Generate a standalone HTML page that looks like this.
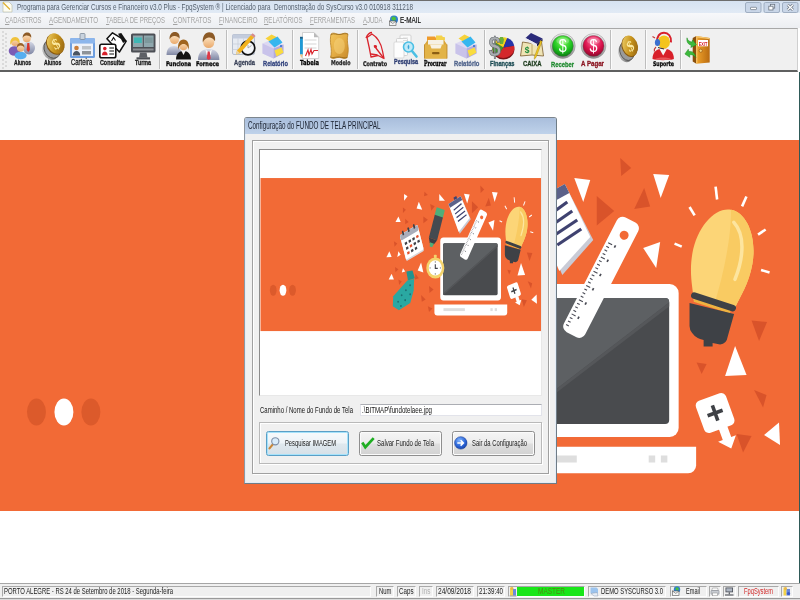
<!DOCTYPE html>
<html lang="pt-BR"><head><meta charset="utf-8"><title>Programa para Gerenciar Cursos e Financeiro</title>
<style>
*{margin:0;padding:0;box-sizing:border-box}
html,body{width:800px;height:600px;overflow:hidden;background:#fff;font-family:"Liberation Sans",sans-serif}
.abs{position:absolute}
#app{will-change:transform;position:relative;width:800px;height:600px;overflow:hidden;background:#fff}
.t{position:absolute;white-space:pre;transform-origin:0 50%}
#titlebar{left:0;top:0;width:800px;height:13px;background:linear-gradient(#d6e2f1,#e1eaf5);border-top:1px solid #6d6d6d}
#menubar{left:0;top:13px;width:800px;height:15px;background:linear-gradient(#f7f8fa,#eceef2)}
#toolbar{left:0;top:28px;width:798px;height:44px;background:#f0f0f0;border-top:1px solid #a8a8a8;border-bottom:2px solid #5f6060;border-right:1px solid #cfcfcf}
#bgimg{left:0;top:72px;width:799px;height:511px;overflow:hidden}
#rightline{left:799px;top:72px;width:1px;height:511px;background:#2f5a58}
#status{left:0;top:583px;width:800px;height:15px;background:#f0f0f0;border-top:1px solid #a6a6a6}
#taskbit{left:0;top:598px;width:800px;height:2px;background:#dadada;border-top:1px solid #9a9a9a}
.sp{position:absolute;top:586px;height:11px;border:1px solid;border-color:#a9a9a9 #fdfdfd #fdfdfd #a9a9a9}
#dlg{left:244px;top:117px;width:313px;height:367px;background:#f0f0f0;border:1px solid #6f7c86;border-left-color:#8f979f;border-top-color:#7d868e;border-radius:3px 3px 0 0;box-shadow:0 0 0 0 #000}
#dlgtitle{left:0;top:0;width:311px;height:16px;background:linear-gradient(#a9bedc,#bfd2ea);border-radius:2px 2px 0 0}
#dlgin{left:0;top:16px;width:311px;height:349px;border:solid #e3ebf5;border-width:0 1px 1px 1px;background:#f0f0f0}
.frame{position:absolute;border:1px solid #a0a0a0;box-shadow:inset 1px 1px 0 #fff, 1px 1px 0 #fff}
.btn{position:absolute;top:431px;height:25px;border:1px solid #8f8f8f;border-radius:2.500px;background:linear-gradient(#f5f5f5 0%,#ececec 48%,#dedede 52%,#d2d2d2 100%);box-shadow:inset 0 0 0 1px #fbfbfb}

</style></head><body><div id="app">
<svg width="0" height="0" style="position:absolute">
<defs>
<symbol id="illus" viewBox="0 0 800 594" preserveAspectRatio="none">
<rect x="0" y="0" width="800" height="594" fill="#fff"/>
<rect x="0" y="68" width="800" height="371" fill="#f26a36"/>
<!-- dots -->
<ellipse cx="36.5" cy="340" rx="9.5" ry="13.6" fill="#dc5a2b"/>
<ellipse cx="64" cy="340" rx="9.5" ry="13.6" fill="#fff"/>
<ellipse cx="91" cy="340" rx="9.5" ry="13.6" fill="#dc5a2b"/>
<!-- dark orange triangles -->
<g fill="#d9532a">
<polygon points="621,86 632,96 622,104"/>
<polygon points="597.5,124 615,139 597.5,153.5"/>
<polygon points="645,116 651,134.5 635,137"/>
<polygon points="752.5,248.5 768,250 760,269"/>
<polygon points="697.5,290.5 707.5,292 702.5,302"/>
<polygon points="755,318 767.5,323 764,335.5"/>
<polygon points="737.5,362 752.5,364 744,380.5"/>
<polygon points="463.5,101.2 473.1,109.4 462.3,112.1"/>
<polygon points="479.5,131.2 492.3,136.6 482.7,147.5"/>
<polygon points="402.7,139.3 411,144.8 402.7,152.9"/>
<polygon points="460.3,161.1 473.1,169.3 460.3,177.5"/>
<polygon points="409.1,166.6 418.7,174.7 409.1,180.2"/>
<polygon points="377.1,221 386.7,226.5 379,234.7"/>
<polygon points="380.3,283.7 389.9,289.1 381.6,296.2"/>
<polygon points="437.9,300 447.5,310.9 436.6,313.7"/>
<polygon points="476.3,330 489.1,338.2 477.6,346.4"/>
<polygon points="453.9,351.8 466.7,362.7 455.9,368.1"/>
<polygon points="473.1,379 485.9,384.5 476.3,392.7"/>
<polygon points="389.9,313.7 399.5,319.1 391.8,327.3"/>
</g>
<!-- white triangles -->
<g fill="#fff">
<polygon points="575,106 591,108 584,130"/>
<polygon points="654,102 670,103 661.5,126"/>
<polygon points="644,176 661,170 657,196"/>
<polygon points="736,274 747.5,303 726,304"/>
<polygon points="780,350.5 781,373 765,363"/>
<polygon points="405.9,106.6 415.5,112.1 405.9,123"/>
<polygon points="505.2,106.6 521.2,123 505.2,123"/>
<polygon points="447.5,125.7 457.1,144.8 441.1,142.1"/>
<polygon points="389.9,161.1 396.3,174.7 381.6,174.7"/>
<polygon points="364.3,245.6 370.7,259.2 356,260.3"/>
<polygon points="389.9,245.6 396.3,253.7 386.7,259.2"/>
<polygon points="453.9,272.8 460.3,297.3 444.3,291.9"/>
<polygon points="370.7,300 377.1,313.7 362.4,313.7"/>
<polygon points="402.7,286.4 409.1,294.6 399.5,297.3"/>
</g>
<!-- calendar -->
<g transform="translate(428 225.4) matrix(.891 -.457 .287 .96 0 0)">
<rect x="-28" y="-33" width="56" height="66" rx="4" fill="#d9d9dd"/>
<rect x="-28" y="-33" width="56" height="62" rx="4" fill="#fff"/>
<rect x="-28" y="-33" width="56" height="14" rx="4" fill="#a9adba"/>
<g fill="#3f4147"><rect x="-20" y="-39" width="5" height="11" rx="2"/><rect x="-2.5" y="-39" width="5" height="11" rx="2"/><rect x="15" y="-39" width="5" height="11" rx="2"/></g>
<g fill="#3f4147">
<rect x="-20" y="-10" width="7" height="6"/><rect x="-8" y="-10" width="7" height="6"/><rect x="4" y="-10" width="7" height="6"/><rect x="16" y="-10" width="7" height="6" fill="#e2502c"/>
<rect x="-20" y="2" width="7" height="6"/><rect x="-8" y="2" width="7" height="6" fill="#e2502c"/><rect x="4" y="2" width="7" height="6"/><rect x="16" y="2" width="7" height="6"/>
<rect x="-20" y="14" width="7" height="6" fill="#e2502c"/><rect x="-8" y="14" width="7" height="6"/><rect x="4" y="14" width="7" height="6"/>
</g>
</g>
<!-- marker -->
<g transform="translate(496 187) rotate(16.6)">
<rect x="-12" y="-47" width="24" height="22" rx="2.500" fill="#4fae79"/>
<rect x="-12" y="-28" width="24" height="58" fill="#454a50"/>
<polygon points="-12,30 12,30 6,42 -6,42" fill="#3a3e44"/>
<polygon points="-6,40 6,40 3.500,50 -3.500,50" fill="#4fae79"/>
</g>
<!-- notepad -->
<g>
<polygon points="533,134 566,113 594,168 563,203" fill="#c9cbd6"/>
<polygon points="531,131 565.5,112 591,165 560,199" fill="#fff"/>
<polygon points="531,131 565.5,112 570,121 535.5,140" fill="#5b6189"/>
<polygon points="545,116 553,111.5 556,117 548,121.5" fill="#3f4270"/>
<g stroke="#3f4270" stroke-width="3.2">
<line x1="546" y1="146" x2="568" y2="130"/>
<line x1="550" y1="155" x2="573" y2="139"/>
<line x1="554" y1="164" x2="578" y2="148"/>
<line x1="558" y1="173" x2="582" y2="157"/>
</g>
</g>
<!-- laptop -->
<rect x="508" y="212" width="171.500" height="153" rx="9" fill="#fff"/>
<rect x="516" y="226" width="154" height="126" rx="4" fill="#494b4e"/>
<path d="M520 226h146a4 4 0 0 1 4 4v.500L516 348.600v-118.600a4 4 0 0 1 4 -4z" fill="#5d6063"/>
<path d="M670 230.500v4L516 352v-3.400z" fill="#55575a"/>
<path d="M491.500 374.700h205.500v18.600a8 8 0 0 1 -8 8h-189.500a8 8 0 0 1 -8 -8z" fill="#fff"/>
<rect x="517" y="383.500" width="60.500" height="7" fill="#dedede"/>
<rect x="649.500" y="383.500" width="6.500" height="7" fill="#dedede"/><rect x="661.700" y="383.500" width="6.500" height="7" fill="#dedede"/>
<!-- clock -->
<rect x="490" y="254" width="8" height="8" rx="2" fill="#f4d36b"/>
<circle cx="494" cy="286" r="25.500" fill="#f4d36b"/>
<circle cx="494" cy="286" r="18.500" fill="#fff"/>
<path d="M494 270v3M494 299v3M478 286h3M507 286h3" stroke="#3f4147" stroke-width="2"/>
<path d="M494 277v10h7" stroke="#3f4147" stroke-width="3" fill="none"/>
<!-- tie -->
<g transform="translate(-5 0)">
<polygon points="417.4,294.6 434.7,291.9 441.1,310.9 421.9,316.4" fill="#23938f"/>
<polygon points="420,316.4 439.2,312.6 437.9,340.9 428.3,370.9 396.3,388.8 379,379 380.3,354.5" fill="#2aa8a2"/>
<g fill="#1d6f73"><circle cx="428" cy="328" r="2.5"/><circle cx="416" cy="340" r="2.5"/><circle cx="428" cy="350" r="2.5"/><circle cx="404" cy="352" r="2.5"/><circle cx="414" cy="364" r="2.5"/><circle cx="394" cy="368" r="2.5"/><circle cx="402" cy="378" r="2.5"/></g>
</g>
<!-- ruler -->
<g transform="translate(601.8 205.3) rotate(27.2)">
<rect x="-12" y="-64.500" width="24" height="129" rx="6.500" fill="#fff"/>
<circle cx="1.3" cy="-48" r="4.5" fill="#f26a36"/>
<g stroke="#4a4b55" stroke-width="1.100">
<path d="M-9.500 -34h4.500M-9.500 -30h3M-9.500 -26h3M-9.500 -22h3M-9.500 -18h4.500M-9.500 -14h3M-9.500 -10h3M-9.500 -6h3M-9.500 -2h4.500M-9.500 2h3M-9.500 6h3M-9.500 10h3M-9.500 14h4.500M-9.500 18h3M-9.500 22h3M-9.500 26h3M-9.500 30h4.500M-9.500 34h3M-9.500 38h3M-9.500 42h3M-9.500 46h4.500M-9.500 50h3M-9.500 54h3M-9.500 58h3"/>
</g>
<g fill="#4a4b55"><rect x="-2.500" y="-35" width="1.700" height="2.600"/><rect x="-2.500" y="-19" width="1.700" height="2.600"/><rect x="-2.500" y="-3" width="1.700" height="2.600"/><rect x="-2.500" y="13" width="1.700" height="2.600"/><rect x="-2.500" y="29" width="1.700" height="2.600"/><rect x="-2.500" y="45" width="1.700" height="2.600"/></g>
</g>
<!-- bulb -->
<g stroke="#fff" stroke-width="2.6" stroke-linecap="butt">
<line x1="716.5" y1="114.6" x2="718" y2="127.5"/>
<line x1="747.4" y1="124.5" x2="743" y2="134.4"/>
<line x1="690.4" y1="135" x2="695.5" y2="143.4"/>
<line x1="766.6" y1="157.5" x2="759" y2="162.6"/>
<line x1="675.4" y1="171.6" x2="682.6" y2="174.6"/>
<line x1="762" y1="198" x2="770.5" y2="200.4"/>
</g>
<g transform="translate(724.3 181) rotate(10)">
<path d="M0 -44 C16 -44 30.500 -22 30.500 6 C30.500 26 24 40 21 52 L-21 52 C-24 40 -30.500 26 -30.500 6 C-30.500 -22 -16 -44 0 -44Z" fill="#fcd577"/>
<path d="M0 -44 C16 -44 30.500 -22 30.500 6 C30.500 26 24 40 21 52 L0 52 C4 20 5 -18 0 -44Z" fill="#f9cb62"/>
<path d="M5 -32 C18 -22 21 0 16 24" stroke="#fde59f" stroke-width="3.500" fill="none" stroke-linecap="round"/>
</g>
<g transform="translate(714.4 229.8) rotate(18)">
<rect x="-19" y="2" width="38" height="4" fill="#efb341"/>
<rect x="-23.500" y="-3.300" width="47" height="6.600" rx="3.300" fill="#3e4146"/>
</g>
<path d="M690.400 231 L735 242 L728.500 265 Q727.500 272 721 272.400 L713.500 271 L713.500 274.500 L704.500 274.500 L704.500 268 Q697 266.500 693 261 Q690.400 258 690.400 254 Z" fill="#3e4146"/>
<!-- plus bubble -->
<g transform="translate(716 341) rotate(-20)">
<rect x="-16" y="-17" width="32" height="34" rx="5" fill="#fff"/>
<path d="M-2 16h9v12h5l-9 11l-10 -11h5z" fill="#fff"/>
<path d="M-8 0h16M0 -8v16" stroke="#3e4146" stroke-width="3.6"/>
</g>
</symbol>
</defs>
</svg>

<div id="titlebar" class="abs"></div>
<div id="menubar" class="abs"></div>
<div id="toolbar" class="abs"></div>
<div id="bgimg" class="abs"><svg class="abs" style="left:0;top:0" width="799" height="594"><use href="#illus" width="799" height="594"/></svg></div>
<div id="rightline" class="abs"></div>
<div id="status" class="abs"></div>
<div id="taskbit" class="abs"></div>
<div class="sp" style="left:2px;width:369px"></div>
<div class="sp" style="left:376px;width:18px"></div>
<div class="sp" style="left:397px;width:19px"></div>
<div class="sp" style="left:419px;width:14px"></div>
<div class="sp" style="left:436px;width:38px"></div>
<div class="sp" style="left:477px;width:28px"></div>
<div class="sp" style="left:508px;width:77px"></div>
<div class="abs" style="left:517px;top:587px;width:67px;height:9px;background:#19e619"></div>
<div class="sp" style="left:588px;width:78px"></div>
<div class="sp" style="left:670px;width:37px"></div>
<div class="sp" style="left:709px;width:12px"></div>
<div class="sp" style="left:723px;width:13px"></div>
<div class="sp" style="left:738px;width:41px"></div>
<div class="sp" style="left:781px;width:12px"></div>
<div id="dlg" class="abs">
<div id="dlgtitle" class="abs"></div>
<div id="dlgin" class="abs"></div>
</div>
<div class="frame" style="left:252px;top:140px;width:297px;height:334px"></div>
<div class="abs" style="left:259px;top:149px;width:283px;height:247px;border:1px solid #8c8c8c;border-right-color:#e8e8e8;border-bottom-color:#e8e8e8;background:#fff"></div>
<svg class="abs" style="left:260px;top:150px" width="281" height="245" viewBox="0 0 281 245"><use href="#illus" x="0.3" y="0" width="283.4" height="245"/></svg>
<div class="abs" style="left:360px;top:404px;width:182px;height:12px;background:#fff;border:1px solid #e2e3ea;border-top-color:#abadb3"></div>
<div class="frame" style="left:259px;top:422px;width:283px;height:42px;border-color:#b9b9b9"></div>
<div class="btn" style="left:266px;width:83px;border-color:#5a9fc6;box-shadow:inset 0 0 0 1px #a6e2fa;background:linear-gradient(#f7fafc 0%,#edf3f7 48%,#dfe8ee 52%,#d6e0e7 100%)"></div>
<div class="btn" style="left:359px;width:83px"></div>
<div class="btn" style="left:452px;width:83px"></div>
<svg class="abs" style="left:244px;top:400px" width="313" height="200" viewBox="244 400 313 200">
<defs>
<radialGradient id="gBlueBtn" cx=".4" cy=".3" r=".8"><stop offset="0" stop-color="#7fb4ff"/><stop offset=".6" stop-color="#2a63d6"/><stop offset="1" stop-color="#123a9a"/></radialGradient>
</defs>
<!-- magnifier -->
<path d="M272.800 444.400l-3.300 4" stroke="#c8873a" stroke-width="2.200" stroke-linecap="round"/>
<circle cx="275.300" cy="441.300" r="3.600" fill="#d8ecfb" stroke="#7d8fa8" stroke-width="1.100"/>
<!-- check -->
<path d="M362.300 442.600l3 4.600 8.400-9" stroke="#1fae22" stroke-width="2.700" fill="none" stroke-linejoin="miter"/>
<!-- arrow circle -->
<circle cx="460.800" cy="442.900" r="6.200" fill="url(#gBlueBtn)" stroke="#1a3f9a" stroke-width=".6"/>
<path d="M457.300 442.900h5.600M460.600 440.200l2.800 2.700-2.800 2.700" stroke="#fff" stroke-width="1.500" fill="none"/>
</svg>
<svg class="abs" style="left:500px;top:584px" width="300" height="14" viewBox="500 584 300 14">
<!-- master icon -->
<rect x="510" y="587.500" width="3" height="8" fill="#f2d24a"/><rect x="513" y="589" width="3" height="6.500" fill="#6a8ad8"/><circle cx="512" cy="588.500" r="1.500" fill="#e8b84a"/><path d="M509.500 596h7" stroke="#555" stroke-width=".6"/>
<!-- demo icon -->
<path d="M590.500 587.500h6l1.500 1.500v4.500h-7.500z" fill="#9cc4ee"/><path d="M591 593.500l3 2.500h4l-1-3.500z" fill="#e8eef6" stroke="#8a9ab0" stroke-width=".5"/>
<!-- email icon -->
<circle cx="677" cy="589.500" r="3.200" fill="#2f7fd0"/><path d="M675.500 588c1-1 2.500-.8 3 .2s0 2-1.200 2.200-1.800-.8-1.800-2.400z" fill="#4cbf3c"/><rect x="672.500" y="591" width="6.500" height="4.500" fill="#f6f6f6" stroke="#555" stroke-width=".6"/><path d="M672.500 591l3.250 2.400 3.250-2.400" stroke="#555" stroke-width=".6" fill="none"/>
<!-- printer -->
<path d="M712.500 588h5l.8 2.500h-6.600z" fill="#fafafa" stroke="#8a8a8a" stroke-width=".5"/><rect x="711" y="590.500" width="8" height="3.800" rx=".6" fill="#c8ccd2" stroke="#7a7e86" stroke-width=".5"/><rect x="712.500" y="593" width="5" height="2.800" fill="#fdfdfd" stroke="#8a8a8a" stroke-width=".5"/>
<!-- network -->
<rect x="725.500" y="587.500" width="7.500" height="4.800" fill="#4a4e56"/><rect x="726.300" y="588.300" width="5.900" height="3.200" fill="#aeb6c2"/><path d="M729.250 592.300v2M725 595h8.500" stroke="#3a3e46" stroke-width="1"/>
<!-- last -->
<rect x="783.500" y="587.500" width="3" height="8" fill="#f2d24a"/><rect x="786.500" y="589" width="3.500" height="6.500" fill="#6a8ad8"/><circle cx="785.500" cy="588.500" r="1.500" fill="#e8b84a"/><circle cx="788.500" cy="593.500" r="1.600" fill="#3a5ac8"/>
</svg>

<svg class="abs" style="left:0;top:0" width="800" height="72" viewBox="0 0 800 72">
<defs>
<linearGradient id="gGold" x1="0" y1="0" x2="1" y2="1"><stop offset="0" stop-color="#f6dc7a"/><stop offset=".5" stop-color="#c8941c"/><stop offset="1" stop-color="#8a5a10"/></linearGradient>
<linearGradient id="gSilver" x1="0" y1="0" x2="1" y2="1"><stop offset="0" stop-color="#d8d8d8"/><stop offset="1" stop-color="#5a5a5a"/></linearGradient>
<radialGradient id="gGreen" cx=".5" cy=".3" r=".7"><stop offset="0" stop-color="#7dfa5a"/><stop offset=".6" stop-color="#1fc41f"/><stop offset="1" stop-color="#0b7a12"/></radialGradient>
<radialGradient id="gRed" cx=".5" cy=".3" r=".7"><stop offset="0" stop-color="#ff6a9a"/><stop offset=".6" stop-color="#d8104a"/><stop offset="1" stop-color="#8a0a2a"/></radialGradient>
<linearGradient id="gRing" x1="0" y1="0" x2="0" y2="1"><stop offset="0" stop-color="#f4f4f4"/><stop offset="1" stop-color="#8c8c8c"/></linearGradient>
<linearGradient id="gSuit" x1="0" y1="0" x2="0" y2="1"><stop offset="0" stop-color="#d5d9e6"/><stop offset="1" stop-color="#7f86a3"/></linearGradient>
<linearGradient id="gSkin" x1="0" y1="0" x2="0" y2="1"><stop offset="0" stop-color="#fde3c0"/><stop offset="1" stop-color="#e9a86a"/></linearGradient>
<linearGradient id="gParch" x1="0" y1="0" x2="1" y2="1"><stop offset="0" stop-color="#f3c65e"/><stop offset=".5" stop-color="#e4ad45"/><stop offset="1" stop-color="#c88a2a"/></linearGradient>
<linearGradient id="gDoor" x1="0" y1="0" x2="1" y2="0"><stop offset="0" stop-color="#f0a32c"/><stop offset="1" stop-color="#b86a10"/></linearGradient>
<g id="coins">
<ellipse cx="8" cy="16" rx="7" ry="8.6" transform="rotate(-28 8 16)" fill="url(#gSilver)"/>
<ellipse cx="9.5" cy="14.5" rx="7" ry="8.6" transform="rotate(-28 9.5 14.5)" fill="#9a9a9a" stroke="#4a4a4a" stroke-width=".7"/>
<ellipse cx="12" cy="10.5" rx="7.6" ry="9.6" transform="rotate(-28 12 10.5)" fill="#8a5a10"/>
<ellipse cx="12.6" cy="9.8" rx="7.4" ry="9.4" transform="rotate(-28 12.6 9.8)" fill="url(#gGold)"/>
<text x="12.6" y="14.6" font-family="Liberation Serif,serif" font-weight="bold" font-size="13" fill="#fbe9a0" text-anchor="middle" transform="rotate(-28 12.6 9.8)">$</text>
</g>
<g id="printer">
<path d="M1 10l9-4 12 5v9l-10 5-11-5z" fill="#dcd8f2"/>
<path d="M1 10l11 5v10l-11-5z" fill="#c9c3ea"/>
<path d="M12 15l10-4v9l-10 5z" fill="#b3abdc"/>
<path d="M4 5l6-4 6 3-6 5z" fill="#f7d23a"/>
<path d="M7 8l9-5 5 6-8 5z" fill="#35b6ef"/>
<path d="M13 17l7-3 2 5-7 4z" fill="#f9dc3e"/>
<circle cx="19.5" cy="12.5" r="1" fill="#2a6fd0"/>
</g>
</defs>
<!-- gripper -->
<g fill="#b5b5b5"><circle cx="3" cy="32" r=".7"/><circle cx="3" cy="36" r=".7"/><circle cx="3" cy="40" r=".7"/><circle cx="3" cy="44" r=".7"/><circle cx="3" cy="48" r=".7"/><circle cx="3" cy="52" r=".7"/><circle cx="3" cy="56" r=".7"/><circle cx="3" cy="60" r=".7"/><circle cx="3" cy="64" r=".7"/><circle cx="3" cy="68" r=".7"/>
<circle cx="6" cy="34" r=".7"/><circle cx="6" cy="38" r=".7"/><circle cx="6" cy="42" r=".7"/><circle cx="6" cy="46" r=".7"/><circle cx="6" cy="50" r=".7"/><circle cx="6" cy="54" r=".7"/><circle cx="6" cy="58" r=".7"/><circle cx="6" cy="62" r=".7"/><circle cx="6" cy="66" r=".7"/></g>
<!-- separators -->
<g stroke="#bdbdbd" stroke-width="1"><path d="M159.5 30v39M226.5 30v39M292.5 30v39M357.5 30v39M484.5 30v39M610.5 30v39M645.5 30v39M680.5 30v39"/></g>
<g stroke="#fbfbfb" stroke-width="1"><path d="M160.5 30v39M227.5 30v39M293.5 30v39M358.5 30v39M485.5 30v39M611.5 30v39M646.5 30v39M681.5 30v39"/></g>
<!-- 1 Alunos (group) -->
<g>
<ellipse cx="29" cy="48" rx="6" ry="6.5" fill="url(#gSuit)"/>
<path d="M27.3 43h2l.6 7-1.6 2-1.6-2z" fill="#d8342a"/>
<circle cx="26.8" cy="38.2" r="4" fill="url(#gSkin)"/>
<path d="M22.6 38c0-4 2.4-5.6 4.6-5.6 2.6 0 4.4 2 4 5.4-1.2-1.6-3-2.4-5-2.2-1.6.2-2.8 1-3.6 2.400z" fill="#8c5a26"/>
<ellipse cx="14.5" cy="51" rx="5.8" ry="4.8" fill="#7b5cb4"/>
<circle cx="15" cy="42" r="4" fill="url(#gSkin)"/>
<path d="M10.400 45c-.8-5 1.400-8 4.800-8 3.200 0 5.200 2.800 4.400 7.600-.8-2.600-2.400-4.200-4.600-4.200-2 0-3.600 1.600-4.600 4.600z" fill="#f0c23c"/>
<ellipse cx="20.6" cy="55.500" rx="6" ry="3.800" fill="#56aef0"/>
<circle cx="20.6" cy="48" r="3.700" fill="url(#gSkin)"/>
<path d="M16.800 48c-.2-3.400 1.600-5 3.800-5s4 1.600 3.800 4.800c-1-1.600-2.200-2.400-3.800-2.400s-2.800.8-3.800 2.600z" fill="#9a6228"/>
</g>
<!-- 2 coin -->
<use href="#coins" transform="translate(41.5 32.5) scale(1.13)"/>
<!-- 3 Carteira -->
<g>
<rect x="70" y="38" width="25" height="20" rx="1.500" fill="#6f9fe0"/>
<rect x="70" y="38" width="25" height="5.500" rx="1.500" fill="#8db6ec"/>
<rect x="72" y="43.500" width="21" height="12.500" fill="#eef2fa"/>
<rect x="80" y="33.500" width="5" height="6" rx="1" fill="#c9d3de" stroke="#7d8a99" stroke-width=".8"/>
<circle cx="76.500" cy="48" r="2.300" fill="#c97d3a"/>
<path d="M72.800 55.500c0-3 1.600-4.600 3.700-4.600s3.700 1.600 3.700 4.600z" fill="#4a5563"/>
<rect x="82" y="46" width="9" height="3.500" fill="#bfc3c8"/>
<rect x="82" y="51" width="9" height="3.500" fill="#8e9399"/>
</g>
<!-- 4 Consultar -->
<g>
<polygon points="106.9,38.8 112.5,32.8 126.2,41.2 119.4,52" fill="#fff" stroke="#111" stroke-width="1.5" stroke-linejoin="round"/>
<polygon points="118.1,33.8 121.3,33.1 126.3,40.6 123.1,43.1" fill="#111"/>
<path d="M111.500 41l2-3.500 2 3" stroke="#111" stroke-width="1.100" fill="none"/>
<rect x="99.800" y="44.300" width="16" height="13.500" rx="1.800" fill="#fff" stroke="#111" stroke-width="1.600"/>
<circle cx="104.800" cy="48.600" r="1.800" fill="#d8202a"/>
<path d="M102 55.300c0-2.600 1.300-3.800 2.800-3.800s2.800 1.200 2.800 3.800z" fill="#d8202a"/>
<path d="M109.300 48h4.700M109.300 51h4.700M109.300 54h4.700" stroke="#111" stroke-width="1.100"/>
</g>
<!-- 5 Turma -->
<g>
<rect x="131" y="33.500" width="24.500" height="19" rx="1.500" fill="#4c4f55"/>
<rect x="133" y="35.500" width="9.800" height="11.500" fill="#8fa7ad"/>
<rect x="143.800" y="35.500" width="9.800" height="11.500" fill="#8fa7ad"/>
<rect x="134" y="37.500" width="7.800" height="5.500" fill="#3fb7b5"/>
<rect x="144.800" y="37.500" width="7.800" height="5.500" fill="#7d989c"/>
<rect x="133" y="48.500" width="20.600" height="2" fill="#8a8d92"/>
<path d="M140 52.500h6.500l1 5h-8.500z" fill="#5d6066"/>
<rect x="136.500" y="57.300" width="13.500" height="2.200" fill="#4c4f55"/>
</g>
<!-- 6 Funciona -->
<g>
<path d="M166.500 55c0-6 3-9 7.500-9s7.500 3 7.500 9z" fill="url(#gSuit)"/>
<circle cx="174.500" cy="39.500" r="4.600" fill="url(#gSkin)"/>
<path d="M169.600 39.500c-.4-5 2.200-7.500 5.200-7.500 3.400 0 5.400 2.600 4.800 6.800-1.400-2-3.200-3-5.400-2.800-2 .2-3.600 1.400-4.600 3.500z" fill="#8c5a26"/>
<path d="M176 59.500c0-5.500 3-8.500 7.500-8.500s7.500 3 7.500 8.500z" fill="#141414"/>
<path d="M181.500 51h4l-2 4z" fill="#f5f5f5"/>
<circle cx="183.500" cy="46" r="4.300" fill="url(#gSkin)"/>
<path d="M178.300 50c-1-7 1.600-10.500 5.200-10.500 3.800 0 6.200 3.600 5.200 10.500-.6-3.600-2.200-6-5.200-6s-4.600 2.400-5.200 6z" fill="#a0641e"/>
</g>
<!-- 7 Fornece -->
<g>
<path d="M198 60c0-7.500 4-11 10.700-11s10.700 3.500 10.700 11z" fill="url(#gSuit)"/>
<path d="M205.500 49.500l3.200 2.500 3.200-2.500-1.200 5.500h-4z" fill="#f7f7f7"/>
<path d="M207.700 51.500h2l1 7-2 1.500-2-1.500z" fill="#dc3a48"/>
<circle cx="208.700" cy="42.500" r="5.600" fill="url(#gSkin)"/>
<path d="M202.800 42.500c-.6-6.500 2.600-10.300 6.400-10.300 4.200 0 6.600 3.400 5.800 9-1.600-2.800-3.800-4-6.400-3.800-2.400.2-4.400 1.800-5.800 5.100z" fill="#8c5a26"/>
</g>
<!-- 8 Agenda -->
<g>
<rect x="232.500" y="34.500" width="22" height="20" rx="1.500" fill="#e7ebf2" stroke="#aab3c4" stroke-width=".8"/>
<rect x="232.500" y="34.500" width="22" height="4" fill="#c3ccdd"/>
<path d="M238 38.500v16M243.500 38.500v16M249 38.500v16M232.500 44h22M232.500 49.500h22" stroke="#c5cbd8" stroke-width=".7"/>
<circle cx="248" cy="48" r="6.800" fill="#f4f6f9" stroke="#111" stroke-width="1.700"/>
<path d="M248 48l3.500-2.500M248 48v-3" stroke="#999" stroke-width=".8"/>
<path d="M236 54.500l1-4 14-15.500 3 2.600-14 15.600z" fill="#f2b21e"/>
<path d="M236 54.500l1-4 3 2.700z" fill="#e9d3a6"/>
<path d="M251 35l1.600-1.700 3 2.600-1.600 1.700z" fill="#d98a8a"/>
</g>
<!-- 9 Relatorio -->
<use href="#printer" x="261.500" y="33.500"/>
<!-- 10 Tabela -->
<g>
<path d="M302.500 32.500h11.500l4.700 4.700v21.300h-16.200z" fill="#fff" stroke="#c8c8c8" stroke-width=".8"/>
<path d="M314 32.500v4.700h4.700z" fill="#b9b9b9"/>
<path d="M304.500 40h12M304.500 44h12M304.500 48h12" stroke="#d5d5d5" stroke-width="1"/>
<rect x="300" y="38.500" width="2.800" height="16" fill="#1f9ad6"/>
<path d="M300 54.500h2.800l-1.400 3.500z" fill="#f1c27a"/>
<rect x="300" y="36.800" width="2.800" height="2" fill="#145f8a"/>
<path d="M305.500 56l2.500-6 1 5 2-5.500 1 4.500 2-3.500h4" stroke="#d9242c" stroke-width="1.100" fill="none"/>
</g>
<!-- 11 Modelo -->
<g>
<path d="M331 34c2-1.600 4-.6 6 0s4 .4 6-.4 3.600-.4 5 .6c-1 4-.6 8 0 12s0 8-1 11.500c-2 1.200-4 .6-6 0s-4-.2-5.600.4-3.400.4-4.800-.6c1-4 .8-8 .2-12s-.6-8 .2-11.500z" fill="url(#gParch)" stroke="#b98224" stroke-width=".8"/>
<ellipse cx="339.300" cy="46" rx="5.500" ry="8" fill="#f6d27a" opacity=".55"/>
<path d="M331 34.500c3-1.500 6 .5 9 0s6-1.400 8-.3" stroke="#8a5e14" stroke-width="1" fill="none" opacity=".6"/>
<path d="M330.500 57c3 1.500 6-.5 9 0s6 1.400 8 .3" stroke="#8a5e14" stroke-width="1" fill="none" opacity=".6"/>
</g>
<!-- 12 Contrato -->
<g fill="none" stroke="#d9242c" stroke-width="1.300" stroke-linejoin="round">
<path d="M366 38c1.500-3.500 4-5.500 6-5.500M367 37.500l5-3.500c5 3 9 9 10.500 17l1.500 7.500-6-3-7 1.500c-1-6-2-11-4-19.500z"/>
<path d="M374 45.500l9.500 12.500M371 54l6.500 1"/>
<circle cx="375.500" cy="46.500" r=".9" fill="#d9242c"/>
</g>
<!-- 13 Pesquisa -->
<g>
<rect x="400" y="35" width="11" height="16" rx="1" fill="#fbfbfb" stroke="#c9c9c9" stroke-width=".8"/>
<rect x="396.500" y="38.500" width="11" height="17" rx="1" fill="#fbfbfb" stroke="#c9c9c9" stroke-width=".8"/>
<rect x="394" y="42" width="10" height="16" rx="1" fill="#fdfdfd" stroke="#d2d2d2" stroke-width=".8"/>
<path d="M403 38h5M403 40.500h5" stroke="#d7d7d7" stroke-width=".8"/>
<circle cx="408.500" cy="47" r="5" fill="#bfe9f8" stroke="#4bbfe4" stroke-width="1.600"/>
<path d="M408.500 44.500c1.200 1.400 1.200 3.400 0 5-1.200-1.600-1.200-3.600 0-5z" fill="#3aa6d8"/>
<path d="M412 51l4.500 5.500" stroke="#4bbfe4" stroke-width="2.600" stroke-linecap="round"/>
</g>
<!-- 14 Procurar -->
<g>
<path d="M427 36.500h8l1 1.500h8.500v6h-17.500z" fill="#ef9a2a"/>
<path d="M436 35.500h6l.8 1.500h2v5h-8.800z" fill="#f4d24a"/>
<path d="M427.500 40h17v6h-17z" fill="#f6f1e4"/>
<path d="M424.500 44.500l3.500-5v7h15.500v-7l3.500 5v14h-22.500z" fill="#d9a53a"/>
<path d="M424.500 44.500h22.500v14h-22.500z" fill="#e2b348"/>
<path d="M430 44.500l1.500 4h9l1.500-4z" fill="#f8f2e2"/>
<rect x="432" y="52" width="7.500" height="2.200" rx="1" fill="#8a5e14"/>
<path d="M424.500 44.500v14M447 44.500v14" stroke="#b98224" stroke-width=".8"/>
</g>
<!-- 15 Relatorio -->
<use href="#printer" x="454.500" y="33.500"/>
<!-- 16 Financas -->
<g>
<ellipse cx="503.4" cy="49.2" rx="11" ry="10.3" fill="#7a1418"/>
<path d="M503.4 47.6 L514.2 45.8 A11 10.3 0 0 1 497.1 56.0 Z" fill="#d4272b"/>
<path d="M503.4 47.6 L497.1 56.0 A11 10.3 0 0 1 494.4 41.7 Z" fill="#3d9a2c"/>
<path d="M503.4 47.6 L494.4 41.7 A11 10.3 0 0 1 507.2 37.9 Z" fill="#f1d21f"/>
<path d="M503.4 47.6 L507.2 37.9 A11 10.3 0 0 1 514.2 45.8 Z" fill="#2734a8"/>
<path d="M499 39.500l1.200-2.500h2.600l1.200 2.500-1 4.500h-3z" fill="#6ab03a"/>
<text x="494.800" y="56.500" font-family="Liberation Sans,sans-serif" font-weight="bold" font-size="27" fill="#a9adb1" stroke="#63676b" stroke-width=".7" text-anchor="middle" transform="translate(98.960 0) scale(.8 1)">$</text>
</g>
<!-- 17 CAIXA -->
<g>
<path d="M520.500 56l2-14 9.500 1.500 9.500-1.500 2 14-11.500-1z" fill="#efe4b5" stroke="#7a5a2a" stroke-width=".8"/>
<path d="M532 43.500v11.500" stroke="#b59a5a" stroke-width=".8"/>
<text x="527" y="53" font-family="Liberation Sans,sans-serif" font-weight="bold" font-size="8.500" fill="#1d8a3a" text-anchor="middle">$</text>
<path d="M525.500 38l5.500-5 11.500 5.500-5.500 5.500z" fill="#2a2a7a"/>
<path d="M525.500 38l11.500 6v2.500l-11.500-6z" fill="#e9e9f2"/>
<path d="M537 44l5.500-5.500v2.500l-5.500 5.500z" fill="#17174f"/>
<path d="M540.500 40.500l1.600.8-6.100 16.200-1.800 1.800.2-2.600z" fill="#f1c81f" stroke="#9a7a0a" stroke-width=".4"/>
</g>
<!-- 18 Receber -->
<g>
<circle cx="562.800" cy="46" r="12.400" fill="url(#gRing)" stroke="#8a8a8a" stroke-width=".5"/>
<circle cx="562.800" cy="46" r="10.600" fill="url(#gGreen)" stroke="#555" stroke-width=".4"/>
<ellipse cx="562.800" cy="40.800" rx="6.500" ry="3.600" fill="#fff" opacity=".25"/>
<text x="562.800" y="52.300" font-family="Liberation Sans,sans-serif" font-size="17.500" fill="#fff" text-anchor="middle" transform="translate(101.304 0) scale(.82 1)">$</text>
</g>
<!-- 19 A Pagar -->
<g>
<circle cx="593.500" cy="46" r="12.400" fill="url(#gRing)" stroke="#8a8a8a" stroke-width=".5"/>
<circle cx="593.500" cy="46" r="10.600" fill="url(#gRed)" stroke="#555" stroke-width=".4"/>
<ellipse cx="593.500" cy="40.800" rx="6.500" ry="3.600" fill="#fff" opacity=".25"/>
<text x="593.500" y="52.300" font-family="Liberation Sans,sans-serif" font-size="17.500" fill="#fff" text-anchor="middle" transform="translate(106.830 0) scale(.82 1)">$</text>
</g>
<!-- 20 coins -->
<use href="#coins" transform="translate(617.5 34.500) scale(1 1.14)"/>
<!-- 21 Suporte -->
<g>
<path d="M652.500 59c0-7 4-10.500 10.700-10.500s10.700 3.500 10.700 10.500c-3 1.500-18 1.500-21.400 0z" fill="#d8202a"/>
<path d="M655 59.300c2-2.400 14-2.400 16.500 0-3 .8-13 .8-16.500 0z" fill="#f37a7a" opacity=".6"/>
<path d="M659.500 49l3.700 6.500 3.700-6.500z" fill="#f6f6f6"/>
<ellipse cx="664" cy="42" rx="6" ry="6.600" fill="#f4c41c"/>
<path d="M657 42.500c-.6-6 2.800-9.800 7-9.800s7.600 3.600 7 9.600" stroke="#d8202a" stroke-width="2" fill="none"/>
<ellipse cx="657.500" cy="42.500" rx="2.600" ry="3.600" fill="#3a6fd0"/>
<path d="M655 38l-2.500-1.500M656 47c-1.600 1.400-2 3-1.600 4.500" stroke="#c23a3a" stroke-width="1.200" fill="none"/>
<path d="M658 47.500l6 1.500" stroke="#333" stroke-width="1"/>
</g>
<!-- 22 Exit -->
<g>
<path d="M692.700 38l3.600-2v27.700l-3.600-2.200z" fill="#8a4f0c"/>
<path d="M696.300 36l13.400 2v24.500l-13.400 1.200z" fill="url(#gDoor)"/>
<path d="M696.300 36l13.400 2v1.200l-12.400-1.800v26.200l-1 .1z" fill="#f7c86e"/>
<rect x="698" y="40" width="10" height="6.300" fill="#fff"/>
<text x="703" y="45.500" font-family="Liberation Sans,sans-serif" font-weight="bold" font-size="5.800" fill="#d8202a" text-anchor="middle" textLength="8.600" lengthAdjust="spacingAndGlyphs">EXIT</text>
<circle cx="700.700" cy="50.700" r="1.600" fill="#f7d27a" stroke="#8a4a08" stroke-width=".6"/>
<path d="M687 37.800c.5 2.500 2.500 4 5 4.300l.6-2.300 3.800 5-5.600 2.700.5-2.300c-3.300-.7-5-3.400-4.300-7.400z" fill="#3cba3c" stroke="#1f8a1f" stroke-width=".5"/>
<path d="M695.800 57.500c-1.500-2.500-4-3.300-6.400-2.500l.5 2.300-5-3.300 3.400-4.800.5 2.400c3.600-.9 6 1.300 7 5.900z" fill="#3cba3c" stroke="#1f8a1f" stroke-width=".5"/>
</g>
<!-- email icon in menu -->
<g>
<circle cx="394" cy="19.500" r="4" fill="#2f7fd0"/>
<path d="M391.500 17.500c1.500-1.500 3-1 4 0s.5 2.500-1 3-2.500 0-3-1.500z" fill="#4cbf3c"/>
<rect x="389.500" y="21" width="6.500" height="4.500" fill="#f4f4f4" stroke="#555" stroke-width=".6"/>
<path d="M389.500 21l3.250 2.500 3.250-2.500" stroke="#555" stroke-width=".6" fill="none"/>
</g>
<!-- app icon in title -->
<g>
<path d="M3 2h6l3 3v7h-9z" fill="#fdfdf2" stroke="#b9b9a0" stroke-width=".6"/>
<path d="M3 2.500l7 7" stroke="#e0b030" stroke-width="1.300"/>
</g>
<!-- window buttons -->
<g>
<rect x="745.500" y="2.500" width="15.500" height="10" rx="1.500" fill="#c9d6e8" stroke="#9aa9bd" stroke-width=".9"/>
<rect x="764" y="2.500" width="15.500" height="10" rx="1.500" fill="#c9d6e8" stroke="#9aa9bd" stroke-width=".9"/>
<rect x="782.500" y="2.500" width="15.500" height="10" rx="1.500" fill="#c9d6e8" stroke="#9aa9bd" stroke-width=".9"/>
<rect x="750.500" y="7.300" width="6" height="2.300" rx=".6" fill="#fdfdfd" stroke="#6a7480" stroke-width=".7"/>
<rect x="770.500" y="4.300" width="4.200" height="3.800" fill="#e8eef6" stroke="#6a7480" stroke-width=".8"/>
<rect x="768.800" y="6.200" width="4.200" height="3.800" fill="#fdfdfd" stroke="#6a7480" stroke-width=".8"/>
<path d="M787.600 4.800l5.400 5.200M793 4.800l-5.400 5.200" stroke="#6a7480" stroke-width="2.600"/>
<path d="M787.600 4.800l5.400 5.200M793 4.800l-5.400 5.200" stroke="#fdfdfd" stroke-width="1.200"/>
</g>
</svg>

<span class="t" style="left:17px;top:2px;font:normal 9.8px/9.8px 'Liberation Sans',sans-serif;color:#55616f;transform:scaleX(0.6501);">Programa para Gerenciar Cursos e Financeiro v3.0 Plus - FpqSystem ® | Licenciado para  Demonstração do SysCurso v3.0 010918 311218</span>
<span class="t" style="left:4.5px;top:16.4px;font:normal 9.2px/9.2px 'Liberation Sans',sans-serif;color:#a3a3a3;transform:scaleX(0.6383);"><u>C</u>ADASTROS</span>
<span class="t" style="left:49px;top:16.4px;font:normal 9.2px/9.2px 'Liberation Sans',sans-serif;color:#a3a3a3;transform:scaleX(0.6823);"><u>A</u>GENDAMENTO</span>
<span class="t" style="left:106px;top:16.4px;font:normal 9.2px/9.2px 'Liberation Sans',sans-serif;color:#a3a3a3;transform:scaleX(0.6504);"><u>T</u>ABELA DE PREÇOS</span>
<span class="t" style="left:172.5px;top:16.4px;font:normal 9.2px/9.2px 'Liberation Sans',sans-serif;color:#a3a3a3;transform:scaleX(0.6773);"><u>C</u>ONTRATOS</span>
<span class="t" style="left:218.5px;top:16.4px;font:normal 9.2px/9.2px 'Liberation Sans',sans-serif;color:#a3a3a3;transform:scaleX(0.6793);"><u>F</u>INANCEIRO</span>
<span class="t" style="left:264px;top:16.4px;font:normal 9.2px/9.2px 'Liberation Sans',sans-serif;color:#a3a3a3;transform:scaleX(0.6576);"><u>R</u>ELATÓRIOS</span>
<span class="t" style="left:310px;top:16.4px;font:normal 9.2px/9.2px 'Liberation Sans',sans-serif;color:#a3a3a3;transform:scaleX(0.6545);"><u>F</u>ERRAMENTAS</span>
<span class="t" style="left:362.5px;top:16.4px;font:normal 9.2px/9.2px 'Liberation Sans',sans-serif;color:#a3a3a3;transform:scaleX(0.6473);"><u>A</u>JUDA</span>
<span class="t" style="left:400px;top:16.4px;font:normal 9.2px/9.2px 'Liberation Sans',sans-serif;color:#111;transform:scaleX(0.6854);-webkit-text-stroke:.2px #111;">E-MAIL</span>
<span class="t" style="left:13.5px;top:60.15px;font:bold 6.9px/6.9px 'Liberation Sans',sans-serif;color:#1c1c1c;transform:scaleX(0.7320);-webkit-text-stroke:.3px #1c1c1c;">Alunos</span>
<span class="t" style="left:44px;top:60.15px;font:bold 6.9px/6.9px 'Liberation Sans',sans-serif;color:#1c1c1c;transform:scaleX(0.7406);-webkit-text-stroke:.3px #1c1c1c;">Alunos</span>
<span class="t" style="left:71.3px;top:59.2px;font:normal 8.2px/8.2px 'Liberation Sans',sans-serif;color:#1a1a1a;transform:scaleX(0.7279);-webkit-text-stroke:.3px #1a1a1a;">Carteira</span>
<span class="t" style="left:100px;top:60.25px;font:bold 6.9px/6.9px 'Liberation Sans',sans-serif;color:#1c1c1c;transform:scaleX(0.7771);-webkit-text-stroke:.3px #1c1c1c;">Consultar</span>
<span class="t" style="left:135px;top:60.25px;font:bold 6.9px/6.9px 'Liberation Sans',sans-serif;color:#1c1c1c;transform:scaleX(0.7787);-webkit-text-stroke:.3px #1c1c1c;">Turma</span>
<span class="t" style="left:166px;top:60.6px;font:bold 6.4px/6.4px 'DejaVu Sans','Liberation Sans',sans-serif;color:#000;transform:scaleX(0.7718);-webkit-text-stroke:.3px #000;">Funciona</span>
<span class="t" style="left:196px;top:60.6px;font:bold 6.4px/6.4px 'DejaVu Sans','Liberation Sans',sans-serif;color:#000;transform:scaleX(0.8026);-webkit-text-stroke:.3px #000;">Fornece</span>
<span class="t" style="left:234px;top:59.3px;font:bold 7.2px/7.2px 'Liberation Sans',sans-serif;color:#3a4258;transform:scaleX(0.7967);-webkit-text-stroke:.3px #3a4258;">Agenda</span>
<span class="t" style="left:262.5px;top:60.1px;font:bold 7px/7px 'Liberation Sans',sans-serif;color:#33447e;transform:scaleX(0.8239);-webkit-text-stroke:.3px #33447e;">Relatório</span>
<span class="t" style="left:300px;top:60.2px;font:bold 7px/7px 'DejaVu Sans','Liberation Sans',sans-serif;color:#000;transform:scaleX(0.7456);-webkit-text-stroke:.3px #000;">Tabela</span>
<span class="t" style="left:330.5px;top:60.35px;font:bold 6.5px/6.5px 'DejaVu Sans','Liberation Sans',sans-serif;color:#2a2a2a;transform:scaleX(0.7303);-webkit-text-stroke:.3px #2a2a2a;">Modelo</span>
<span class="t" style="left:363px;top:60.9px;font:bold 6.4px/6.4px 'DejaVu Sans','Liberation Sans',sans-serif;color:#1a1a1a;transform:scaleX(0.7593);-webkit-text-stroke:.3px #1a1a1a;">Contrato</span>
<span class="t" style="left:394px;top:59.35px;font:bold 7.1px/7.1px 'Liberation Sans',sans-serif;color:#2a3a70;transform:scaleX(0.7703);-webkit-text-stroke:.3px #2a3a70;">Pesquisa</span>
<span class="t" style="left:424.3px;top:60.2px;font:bold 7.4px/7.4px 'Liberation Serif',serif;color:#000;transform:scaleX(0.7754);-webkit-text-stroke:.3px #000;">Procurar</span>
<span class="t" style="left:454px;top:60.1px;font:bold 7px/7px 'Liberation Sans',sans-serif;color:#50648c;transform:scaleX(0.8371);-webkit-text-stroke:.3px #50648c;">Relatório</span>
<span class="t" style="left:489.5px;top:59.9px;font:bold 7.4px/7.4px 'Liberation Sans',sans-serif;color:#1a4a52;transform:scaleX(0.7645);-webkit-text-stroke:.3px #1a4a52;">Finanças</span>
<span class="t" style="left:522.5px;top:59.5px;font:bold 7.4px/7.4px 'Liberation Sans',sans-serif;color:#1c3a1c;transform:scaleX(0.8043);-webkit-text-stroke:.3px #1c3a1c;">CAIXA</span>
<span class="t" style="left:551px;top:60.5px;font:bold 7.6px/7.6px 'Liberation Sans',sans-serif;color:#1e8a2e;transform:scaleX(0.7671);-webkit-text-stroke:.3px #1e8a2e;">Receber</span>
<span class="t" style="left:581px;top:60px;font:bold 7.6px/7.6px 'Liberation Sans',sans-serif;color:#8a1420;transform:scaleX(0.8092);-webkit-text-stroke:.3px #8a1420;">A Pagar</span>
<span class="t" style="left:653px;top:60.6px;font:bold 6.4px/6.4px 'DejaVu Sans','Liberation Sans',sans-serif;color:#000;transform:scaleX(0.7324);-webkit-text-stroke:.3px #000;">Suporte</span>
<span class="t" style="left:248px;top:121.1px;font:normal 10px/10px 'Liberation Sans',sans-serif;color:#1b2230;transform:scaleX(0.6301);">Configuração do FUNDO DE TELA PRINCIPAL</span>
<span class="t" style="left:260px;top:406.05px;font:normal 8.5px/8.5px 'Liberation Sans',sans-serif;color:#151515;transform:scaleX(0.7063);">Caminho / Nome do Fundo de Tela</span>
<span class="t" style="left:362px;top:406.05px;font:normal 8.5px/8.5px 'Liberation Sans',sans-serif;color:#111;transform:scaleX(0.7226);">.\BITMAP\fundotelaee.jpg</span>
<span class="t" style="left:285px;top:439.25px;font:normal 8.5px/8.5px 'Liberation Sans',sans-serif;color:#1c1c1c;transform:scaleX(0.6833);">Pesquisar IMAGEM</span>
<span class="t" style="left:377px;top:439.25px;font:normal 8.5px/8.5px 'Liberation Sans',sans-serif;color:#1c1c1c;transform:scaleX(0.7108);">Salvar Fundo de Tela</span>
<span class="t" style="left:472px;top:439.25px;font:normal 8.5px/8.5px 'Liberation Sans',sans-serif;color:#1c1c1c;transform:scaleX(0.6887);">Sair da Configuração</span>
<span class="t" style="left:4px;top:587.1px;font:normal 8.4px/8.4px 'Liberation Sans',sans-serif;color:#1c1c1c;transform:scaleX(0.7072);">PORTO ALEGRE - RS 24 de Setembro de 2018 - Segunda-feira</span>
<span class="t" style="left:378.5px;top:587.1px;font:normal 8.4px/8.4px 'Liberation Sans',sans-serif;color:#1c1c1c;transform:scaleX(0.7067);">Num</span>
<span class="t" style="left:399px;top:587.1px;font:normal 8.4px/8.4px 'Liberation Sans',sans-serif;color:#1c1c1c;transform:scaleX(0.7412);">Caps</span>
<span class="t" style="left:421.5px;top:587.1px;font:normal 8.4px/8.4px 'Liberation Sans',sans-serif;color:#b0b0b0;transform:scaleX(0.7598);">Ins</span>
<span class="t" style="left:438px;top:587.1px;font:normal 8.4px/8.4px 'Liberation Sans',sans-serif;color:#1c1c1c;transform:scaleX(0.7872);">24/09/2018</span>
<span class="t" style="left:479px;top:587.1px;font:normal 8.4px/8.4px 'Liberation Sans',sans-serif;color:#1c1c1c;transform:scaleX(0.7360);">21:39:40</span>
<span class="t" style="left:538px;top:587.1px;font:normal 8.4px/8.4px 'Liberation Sans',sans-serif;color:#4b8a12;transform:scaleX(0.7735);">MASTER</span>
<span class="t" style="left:601px;top:587.1px;font:normal 8.4px/8.4px 'Liberation Sans',sans-serif;color:#1c1c1c;transform:scaleX(0.7011);">DEMO SYSCURSO 3.0</span>
<span class="t" style="left:686px;top:587.1px;font:normal 8.4px/8.4px 'Liberation Sans',sans-serif;color:#1c1c1c;transform:scaleX(0.6682);">Email</span>
<span class="t" style="left:744px;top:587.1px;font:normal 8.4px/8.4px 'Liberation Sans',sans-serif;color:#d22a2a;transform:scaleX(0.6846);">FpqSystem</span>
</div></body></html>
